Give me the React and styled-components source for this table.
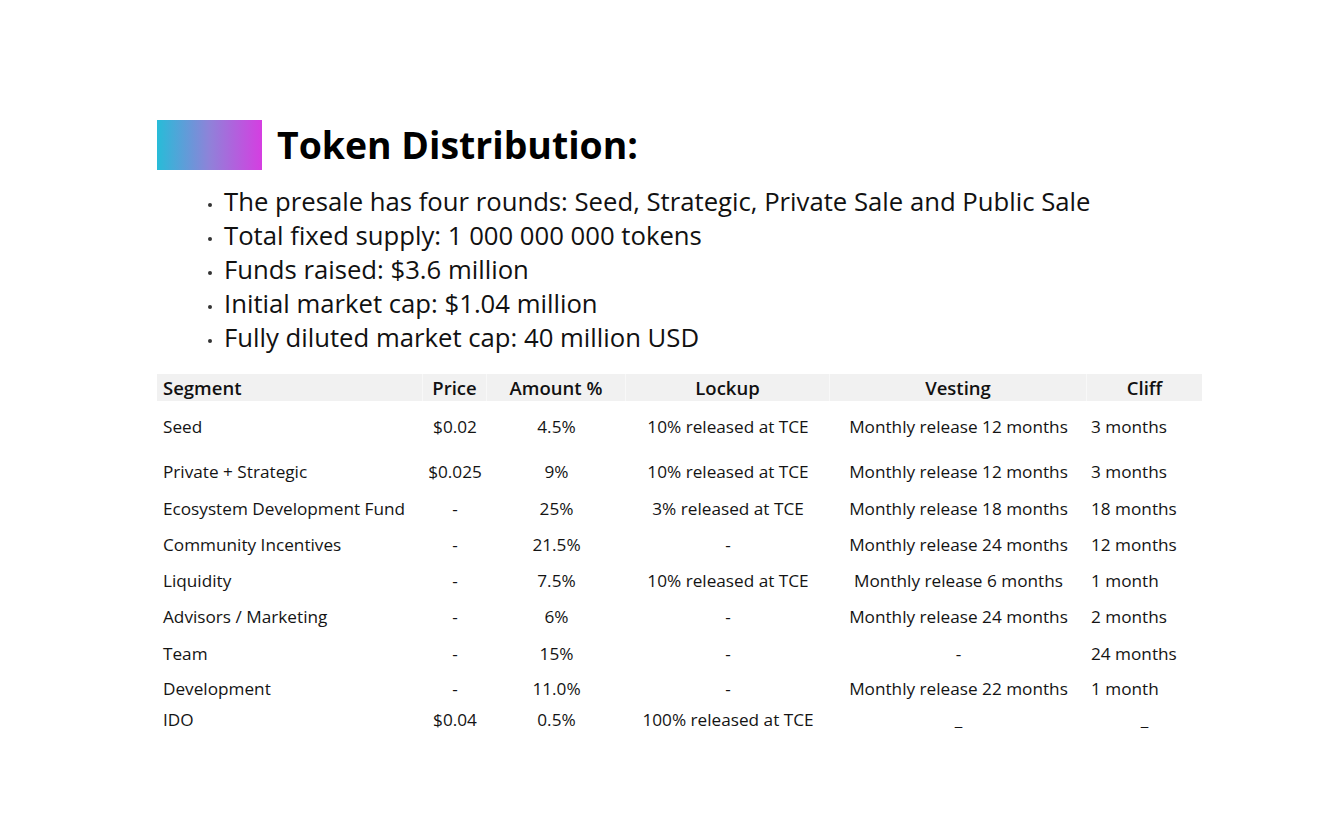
import React from "react";
import styled, { createGlobalStyle } from "styled-components";

const GlobalStyle = createGlobalStyle`
  html, body {
    margin: 0;
    padding: 0;
    background: #ffffff;
  }
  body {
    font-family: "Open Sans", "Noto Sans", sans-serif;
    color: #111111;
  }
`;

const Page = styled.main`
  width: 1333px;
  min-height: 833px;
  box-sizing: border-box;
  padding: 120px 0 0 157px;
  display: flex;
  flex-direction: column;
`;

const TitleRow = styled.header`
  display: flex;
  align-items: center;
  gap: 15px;
  height: 50px;
`;

const GradientBlock = styled.div`
  width: 105px;
  height: 50px;
  background: linear-gradient(90deg, #27bcd8 0%, #8f82d9 50%, #d53ee1 100%);
`;

const Title = styled.h1`
  margin: 0;
  font-family: "Open Sans", sans-serif;
  font-weight: 700;
  font-size: 37.4px;
  line-height: 50px;
  color: #000000;
`;

const BulletList = styled.ul`
  list-style: none;
  margin: 15px 0 0 0;
  padding: 0 0 0 67px;
  display: flex;
  flex-direction: column;
`;

const Bullet = styled.li`
  position: relative;
  font-size: 25.7px;
  line-height: 34px;
  height: 34px;
  color: #111111;
  white-space: nowrap;

  &::before {
    content: "";
    position: absolute;
    left: -16px;
    top: 18px;
    width: 4px;
    height: 4px;
    border-radius: 50%;
    background: #333333;
  }
`;

const Table = styled.div`
  margin-top: 19px;
  width: 1045px;
  display: grid;
  grid-template-columns: 266px 64px 139px 204px 257px 115px;
`;

const HeadCell = styled.div`
  height: 27px;
  background: #f1f1f1;
  font-size: 18.5px;
  font-weight: 600;
  line-height: 27px;
  color: #111111;
  white-space: nowrap;
  text-align: ${(p) => p.$align || "center"};
  padding: 0 ${(p) => (p.$align === "left" ? "6px" : "0")};
  border-right: ${(p) => (p.$last ? "none" : "1px solid #f8f8f8")};
  box-sizing: border-box;
`;

const Cell = styled.div`
  height: ${(p) => p.$h}px;
  display: flex;
  align-items: center;
  justify-content: ${(p) => (p.$align === "left" ? "flex-start" : "center")};
  padding-left: ${(p) => p.$pad || 0}px;
  font-size: 17.2px;
  line-height: 20px;
  color: #141414;
  white-space: nowrap;
  box-sizing: border-box;
`;

const headers = ["Segment", "Price", "Amount %", "Lockup", "Vesting", "Cliff"];

const rows = [
  { h: 52, c: ["Seed", "$0.02", "4.5%", "10% released at TCE", "Monthly release 12 months", "3 months"] },
  { h: 38, c: ["Private + Strategic", "$0.025", "9%", "10% released at TCE", "Monthly release 12 months", "3 months"] },
  { h: 36, c: ["Ecosystem Development Fund", "-", "25%", "3% released at TCE", "Monthly release 18 months", "18 months"] },
  { h: 36, c: ["Community Incentives", "-", "21.5%", "-", "Monthly release 24 months", "12 months"] },
  { h: 36, c: ["Liquidity", "-", "7.5%", "10% released at TCE", "Monthly release 6 months", "1 month"] },
  { h: 36, c: ["Advisors / Marketing", "-", "6%", "-", "Monthly release 24 months", "2 months"] },
  { h: 38, c: ["Team", "-", "15%", "-", "-", "24 months"] },
  { h: 32, c: ["Development", "-", "11.0%", "-", "Monthly release 22 months", "1 month"] },
  { h: 30, c: ["IDO", "$0.04", "0.5%", "100% released at TCE", "_", "_"], cliffCenter: true },
];

const bullets = [
  "The presale has four rounds: Seed, Strategic, Private Sale and Public Sale",
  "Total fixed supply: 1 000 000 000 tokens",
  "Funds raised: $3.6 million",
  "Initial market cap: $1.04 million",
  "Fully diluted market cap: 40 million USD",
];

export default function App() {
  return (
    <>
      <GlobalStyle />
      <Page>
        <TitleRow>
          <GradientBlock />
          <Title>Token Distribution:</Title>
        </TitleRow>
        <BulletList>
          {bullets.map((b) => (
            <Bullet key={b}>{b}</Bullet>
          ))}
        </BulletList>
        <Table>
          {headers.map((h, i) => (
            <HeadCell key={h} $align={i === 0 ? "left" : "center"} $last={i === headers.length - 1}>
              {h}
            </HeadCell>
          ))}
          {rows.map((r) =>
            r.c.map((v, i) => {
              let align = "center";
              let pad = 0;
              if (i === 0) {
                align = "left";
                pad = 6;
              } else if (i === 5 && !r.cliffCenter) {
                align = "left";
                pad = 4;
              }
              return (
                <Cell key={r.c[0] + i} $h={r.h} $align={align} $pad={pad}>
                  {v}
                </Cell>
              );
            })
          )}
        </Table>
      </Page>
    </>
  );
}
